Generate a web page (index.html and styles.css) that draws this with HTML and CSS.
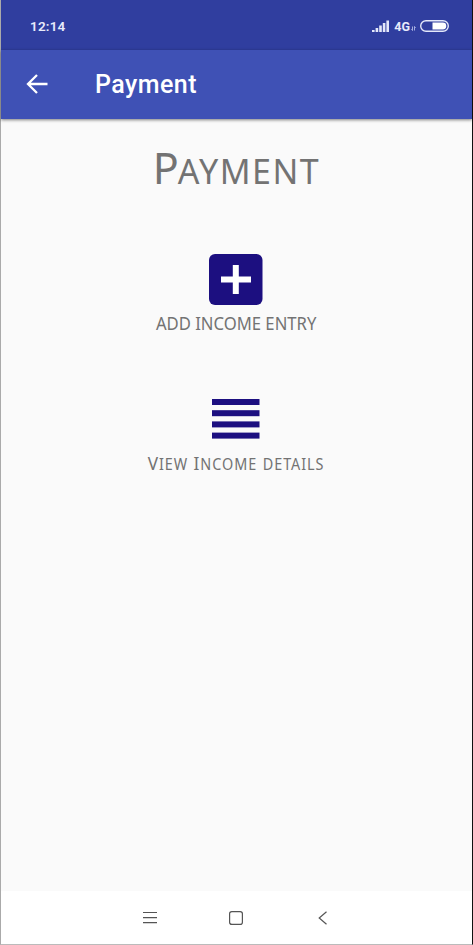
FILE: index.html
```html
<!DOCTYPE html>
<html lang="en">
<head>
    <meta charset="UTF-8">
    <meta name="viewport" content="width=device-width, initial-scale=1.0">
    <title>Payment</title>
    <link rel="stylesheet" href="styles.css">
</head>
<body>

    <div class="screen">
        <div class="status-bar">
            <span class="time">12:14</span>
            <div class="status-icons">
                <svg class="signal" width="17" height="12" viewBox="0 0 17 12" fill="#e4e8fa">
                    <rect x="0" y="10" width="2.6" height="2"/>
                    <rect x="3.6" y="8" width="2.6" height="4"/>
                    <rect x="7.2" y="5.5" width="2.6" height="6.5"/>
                    <rect x="10.8" y="3" width="2.6" height="9"/>
                    <rect x="14.4" y="0.5" width="2.6" height="11.5"/>
                </svg>
                <span class="network">4G</span>
                <svg class="data" width="5" height="5" viewBox="0 0 5 5" fill="none" stroke="#c3caef" stroke-width="0.8">
                    <path d="M1.5 0.5v4L0.3 3.3M3.5 4.5v-4l1.2 1.2"/>
                </svg>
                <svg width="29" height="12" viewBox="0 0 29 12">
                    <rect x="0.7" y="0.7" width="27.6" height="10.6" rx="5.3" fill="none" stroke="#e4e8fa" stroke-width="1.4"/>
                    <path d="M12.5 2.6h10.4a3.4 3.4 0 0 1 0 6.8H12.5z" fill="#fff"/>
                </svg>
            </div>
        </div>

        <header class="app-bar">
            <svg width="22" height="20" viewBox="0 0 22 20" fill="none" stroke="#fff" stroke-width="2.3">
                <path d="M21.5 10H2M11 1L2 10l9 9"/>
            </svg>
            <span class="app-title">Payment</span>
        </header>

        <main class="content">
            <h1 class="heading">Payment</h1>

            <a class="action">
                <svg width="54" height="51" viewBox="0 0 54 51">
                    <rect width="53.5" height="51" rx="6" fill="#1c0f80"/>
                    <path d="M12 25.5h30M26.8 11v29" stroke="#fff" stroke-width="6"/>
                </svg>
                <span class="add-label">ADD INCOME ENTRY</span>
            </a>

            <a class="action view">
                <svg width="48" height="40" viewBox="0 0 48 40" fill="#1c0f80">
                    <rect width="47.5" height="6"/>
                    <rect y="11.2" width="47.5" height="6"/>
                    <rect y="22.4" width="47.5" height="6"/>
                    <rect y="33.6" width="47.5" height="6"/>
                </svg>
                <span class="view-label"><span class="word">View</span><span class="word">Income</span><span>details</span></span>
            </a>
        </main>

        <nav class="nav-bar">
            <svg width="14" height="14" viewBox="0 0 14 14" fill="none" stroke="#555" stroke-width="1.2">
                <path d="M0 1.5h14M0 6.7h14M0 11.7h14"/>
            </svg>
            <svg width="14" height="14" viewBox="0 0 14 14" fill="none" stroke="#555" stroke-width="1.2">
                <rect x="0.6" y="0.6" width="12.8" height="12.8" rx="2.2"/>
            </svg>
            <svg width="14" height="14" viewBox="0 0 14 14" fill="none" stroke="#555" stroke-width="1.2">
                <path d="M11.5 0.7L4.2 7l7.3 6.3"/>
            </svg>
        </nav>
    </div>

</body>
</html>
```

FILE: styles.css
```css
* {
    box-sizing: border-box;
}
body {
    margin: 0;
    font-family: Roboto, sans-serif;
    background-color: #fafafa;
}
svg {
    display: block;
    flex: none;
}
.screen {
    height: 945px;
    width: 473px;
    display: flex;
    flex-direction: column;
    border-left: 1px solid #aaa;
    border-right: 1px solid #111;
    border-bottom: 1px solid #bbb;
}
.status-bar {
    height: 50px;
    padding: 2px 23px 0 29px;
    display: flex;
    align-items: center;
    justify-content: space-between;
    background-color: #303e9f;
    color: #e8ebfb;
}
.time {
    font-size: 13.5px;
    font-weight: 600;
    letter-spacing: 0.2px;
}
.status-icons {
    display: flex;
    align-items: center;
}
.network {
    margin-left: 5px;
    font-size: 12.5px;
    font-weight: 700;
}
.data {
    margin: 5px 4px 0 1px;
}
.app-bar {
    height: 69px;
    padding-left: 25px;
    display: flex;
    align-items: center;
    gap: 47px;
    background-color: #3f51b5;
    color: white;
    box-shadow: 0 1px 3px rgba(0, 0, 0, 0.5);
}
.app-bar svg {
    margin-bottom: 2px;
}
.app-title {
    font-size: 25px;
    font-weight: 500;
    letter-spacing: 0.45px;
}
.content {
    flex: 1;
    display: flex;
    flex-direction: column;
    align-items: center;
    font-family: "Noto Sans", sans-serif;
    color: #737373;
}
.heading {
    margin: 19px 0 0;
    height: 60px;
    line-height: 60px;
    font-size: 34px;
    font-weight: 400;
    letter-spacing: 1.5px;
    text-transform: uppercase;
}
.heading::first-letter {
    font-size: 43px;
    letter-spacing: -1px;
}
.action {
    margin-top: 56px;
    display: flex;
    flex-direction: column;
    align-items: center;
}
.add-label {
    margin-top: 5px;
    font-size: 18.5px;
    line-height: 26px;
    white-space: nowrap;
    transform: scaleX(0.9);
}
.view {
    margin-top: 63px;
}
/* condensed small capitals */
.view-label {
    margin-top: 11px;
    display: flex;
    align-items: baseline;
    gap: 6px;
    font-size: 15.5px;
    line-height: 26px;
    letter-spacing: 1px;
    text-transform: uppercase;
    transform: scaleX(0.93);
}
.word {
    display: block;
}
.word::first-letter {
    font-size: 18.5px;
}
.nav-bar {
    height: 53px;
    padding-right: 2px;
    display: flex;
    align-items: center;
    justify-content: center;
    gap: 72px;
    background-color: white;
}
```
